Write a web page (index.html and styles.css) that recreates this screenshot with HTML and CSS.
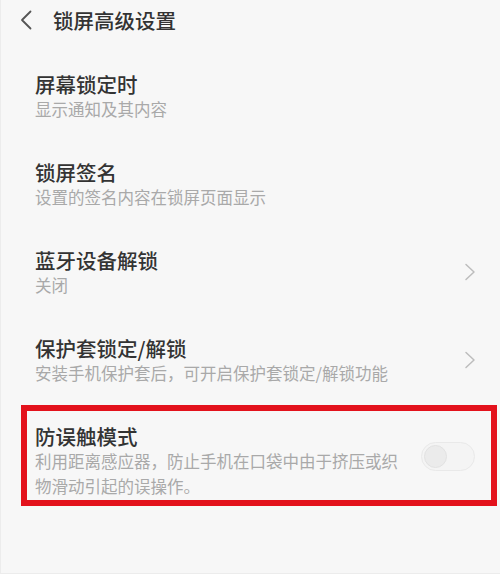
FILE: index.html
```html
<!DOCTYPE html>
<html lang="zh-CN">
<head>
<meta charset="utf-8">
<title>锁屏高级设置</title>
<link rel="stylesheet" href="styles.css">
</head>
<body>
<div class="screen">
  <header class="header">
    <svg class="back" width="12" height="20" viewBox="0 0 12 20"><path d="M10.5 1.5 L2 10 L10.5 18.5" fill="none" stroke="#555" stroke-width="1.8" stroke-linecap="round" stroke-linejoin="round"/></svg>
    <h1 class="header-title">锁屏高级设置</h1>
  </header>
  <ul class="list">
    <li class="item">
      <div class="text">
        <div class="title">屏幕锁定时</div>
        <div class="sub">显示通知及其内容</div>
      </div>
    </li>
    <li class="item">
      <div class="text">
        <div class="title">锁屏签名</div>
        <div class="sub">设置的签名内容在锁屏页面显示</div>
      </div>
    </li>
    <li class="item">
      <div class="text">
        <div class="title">蓝牙设备解锁</div>
        <div class="sub">关闭</div>
      </div>
      <svg class="chev" width="12" height="18" viewBox="0 0 12 18"><path d="M2 1.5 L10 9 L2 16.5" fill="none" stroke="#bdbdbd" stroke-width="1.5" stroke-linecap="round" stroke-linejoin="round"/></svg>
    </li>
    <li class="item">
      <div class="text">
        <div class="title">保护套锁定/解锁</div>
        <div class="sub">安装手机保护套后，可开启保护套锁定/解锁功能</div>
      </div>
      <svg class="chev" width="12" height="18" viewBox="0 0 12 18"><path d="M2 1.5 L10 9 L2 16.5" fill="none" stroke="#bdbdbd" stroke-width="1.5" stroke-linecap="round" stroke-linejoin="round"/></svg>
    </li>
    <li class="item item-highlight">
      <div class="text text-narrow">
        <div class="title">防误触模式</div>
        <div class="sub">利用距离感应器，防止手机在口袋中由于挤压或织物滑动引起的误操作。</div>
      </div>
      <div class="toggle"><div class="knob"></div></div>
    </li>
  </ul>
</div>
</body>
</html>
```
FILE: styles.css
```css
html, body {
  margin: 0;
  padding: 0;
}
body {
  background: #f7f7f7;
  font-family: "Noto Sans CJK SC", "Noto Sans", sans-serif;
  color: #333;
}
.screen {
  width: 500px;
  height: 574px;
  box-sizing: border-box;
  border-left: 1px solid #ececec;
  border-bottom: 1px solid #ececec;
  overflow: hidden;
}
.header {
  height: 40px;
  display: flex;
  align-items: center;
  padding-left: 19px;
}
.back {
  display: block;
}
.header-title {
  margin: 0 0 0 21px;
  font-size: 20.5px;
  font-weight: 500;
  line-height: 26px;
  color: #333;
}
.list {
  list-style: none;
  margin: 0;
  padding: 12px 0 0 0;
}
.item {
  display: flex;
  align-items: center;
  padding: 19px 24px 19px 34px;
}
.text {
  flex: 1;
}
.title {
  font-size: 20.5px;
  font-weight: 500;
  line-height: 26px;
  color: #333;
}
.sub {
  font-size: 16.5px;
  line-height: 24px;
  color: #a9a9a9;
}
.chev {
  display: block;
}
.item-highlight {
  margin: 1px 3px 0 20px;
  border: 6px solid #e3121c;
  padding: 12px 16px 1px 8px;
}
.item-highlight .sub {
  line-height: 25px;
}
.text-narrow {
  flex: 0 0 372px;
}
.toggle {
  margin-left: auto;
  width: 50px;
  height: 27px;
  border: 1.5px solid #e9e9e9;
  border-radius: 15px;
  background: #f4f4f4;
  display: flex;
  align-items: center;
  padding-left: 2px;
  margin-top: -10px;
}
.knob {
  width: 23px;
  height: 23px;
  border-radius: 50%;
  background: #ebebeb;
  border: 1px solid #e2e2e2;
  box-sizing: border-box;
}
```
